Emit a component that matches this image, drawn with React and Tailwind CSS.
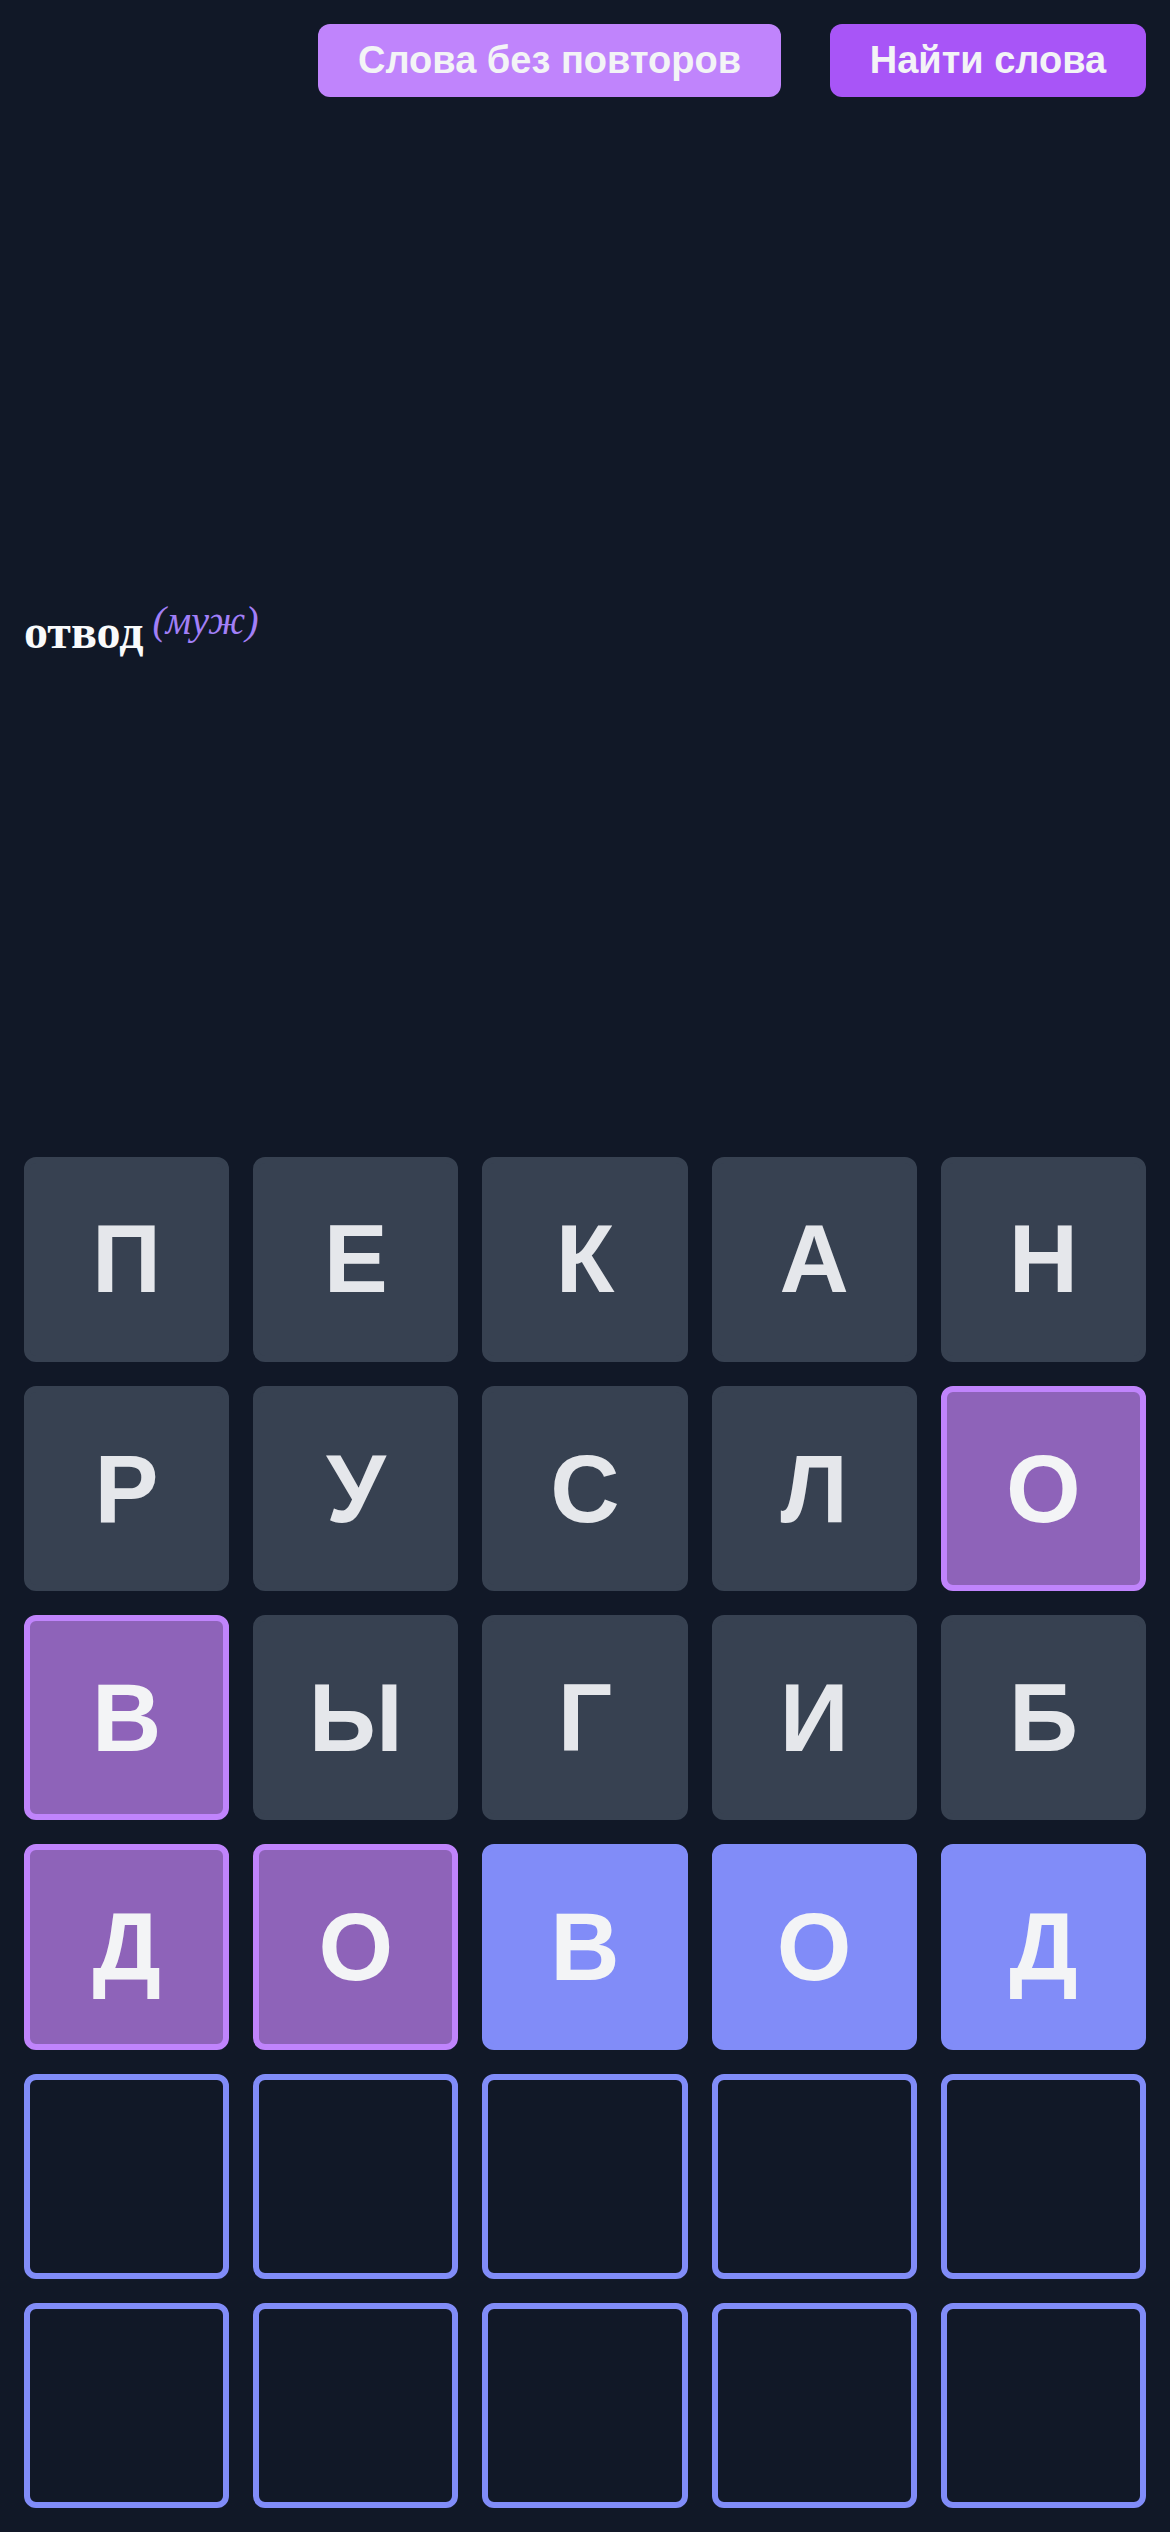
import React from "react"

const rows = [
  [["П", "g"], ["Е", "g"], ["К", "g"], ["А", "g"], ["Н", "g"]],
  [["Р", "g"], ["У", "g"], ["С", "g"], ["Л", "g"], ["О", "p"]],
  [["В", "p"], ["Ы", "g"], ["Г", "g"], ["И", "g"], ["Б", "g"]],
  [["Д", "p"], ["О", "p"], ["В", "b"], ["О", "b"], ["Д", "b"]],
  [["", "e"], ["", "e"], ["", "e"], ["", "e"], ["", "e"]],
  [["", "e"], ["", "e"], ["", "e"], ["", "e"], ["", "e"]],
]

const tileStyles = {
  g: "bg-[#374151] border-[#374151] text-[#e5e7eb]",
  p: "bg-[#8e63b9] border-[#c084fc] text-[#f3f4f6]",
  b: "bg-[#818cf8] border-[#818cf8] text-[#f3f4f6]",
  e: "bg-transparent border-[#818cf8]",
}

const App = () => {
  return (
    <div className="h-[2532px] w-full bg-[#111827] flex flex-col font-['Liberation_Sans',Arial,sans-serif]">
      <div className="flex justify-end gap-[49px] px-6 pt-6">
        <button className="bg-[#c084fc] text-[#f3f4f6] font-bold text-[38px] leading-[49px] rounded-xl py-3 w-[463px]">
          Слова без повторов
        </button>
        <button className="bg-[#a855f7] text-[#f3f4f6] font-bold text-[38px] leading-[49px] rounded-xl py-3 w-[316px]">
          Найти слова
        </button>
      </div>

      <div className="flex-1 flex items-center px-6 pt-[10px]">
        <p className="font-['Liberation_Serif','Times_New_Roman',serif] text-[48px] leading-none">
          <span className="font-bold text-[#f9fafb]">отвод</span>{" "}
          <sup className="italic text-[#a17ff7] text-[40px] top-[-14px] -ml-[3px]">(муж)</sup>
        </p>
      </div>

      <div className="grid grid-cols-5 gap-6 px-6 pb-6">
        {rows.flat().map(([letter, kind], i) => (
          <div
            key={i}
            className={`aspect-square rounded-xl border-[6px] flex items-center justify-center font-bold text-[96px] leading-none ${tileStyles[kind]}`}
          >
            {letter}
          </div>
        ))}
      </div>
    </div>
  )
}

export default App
